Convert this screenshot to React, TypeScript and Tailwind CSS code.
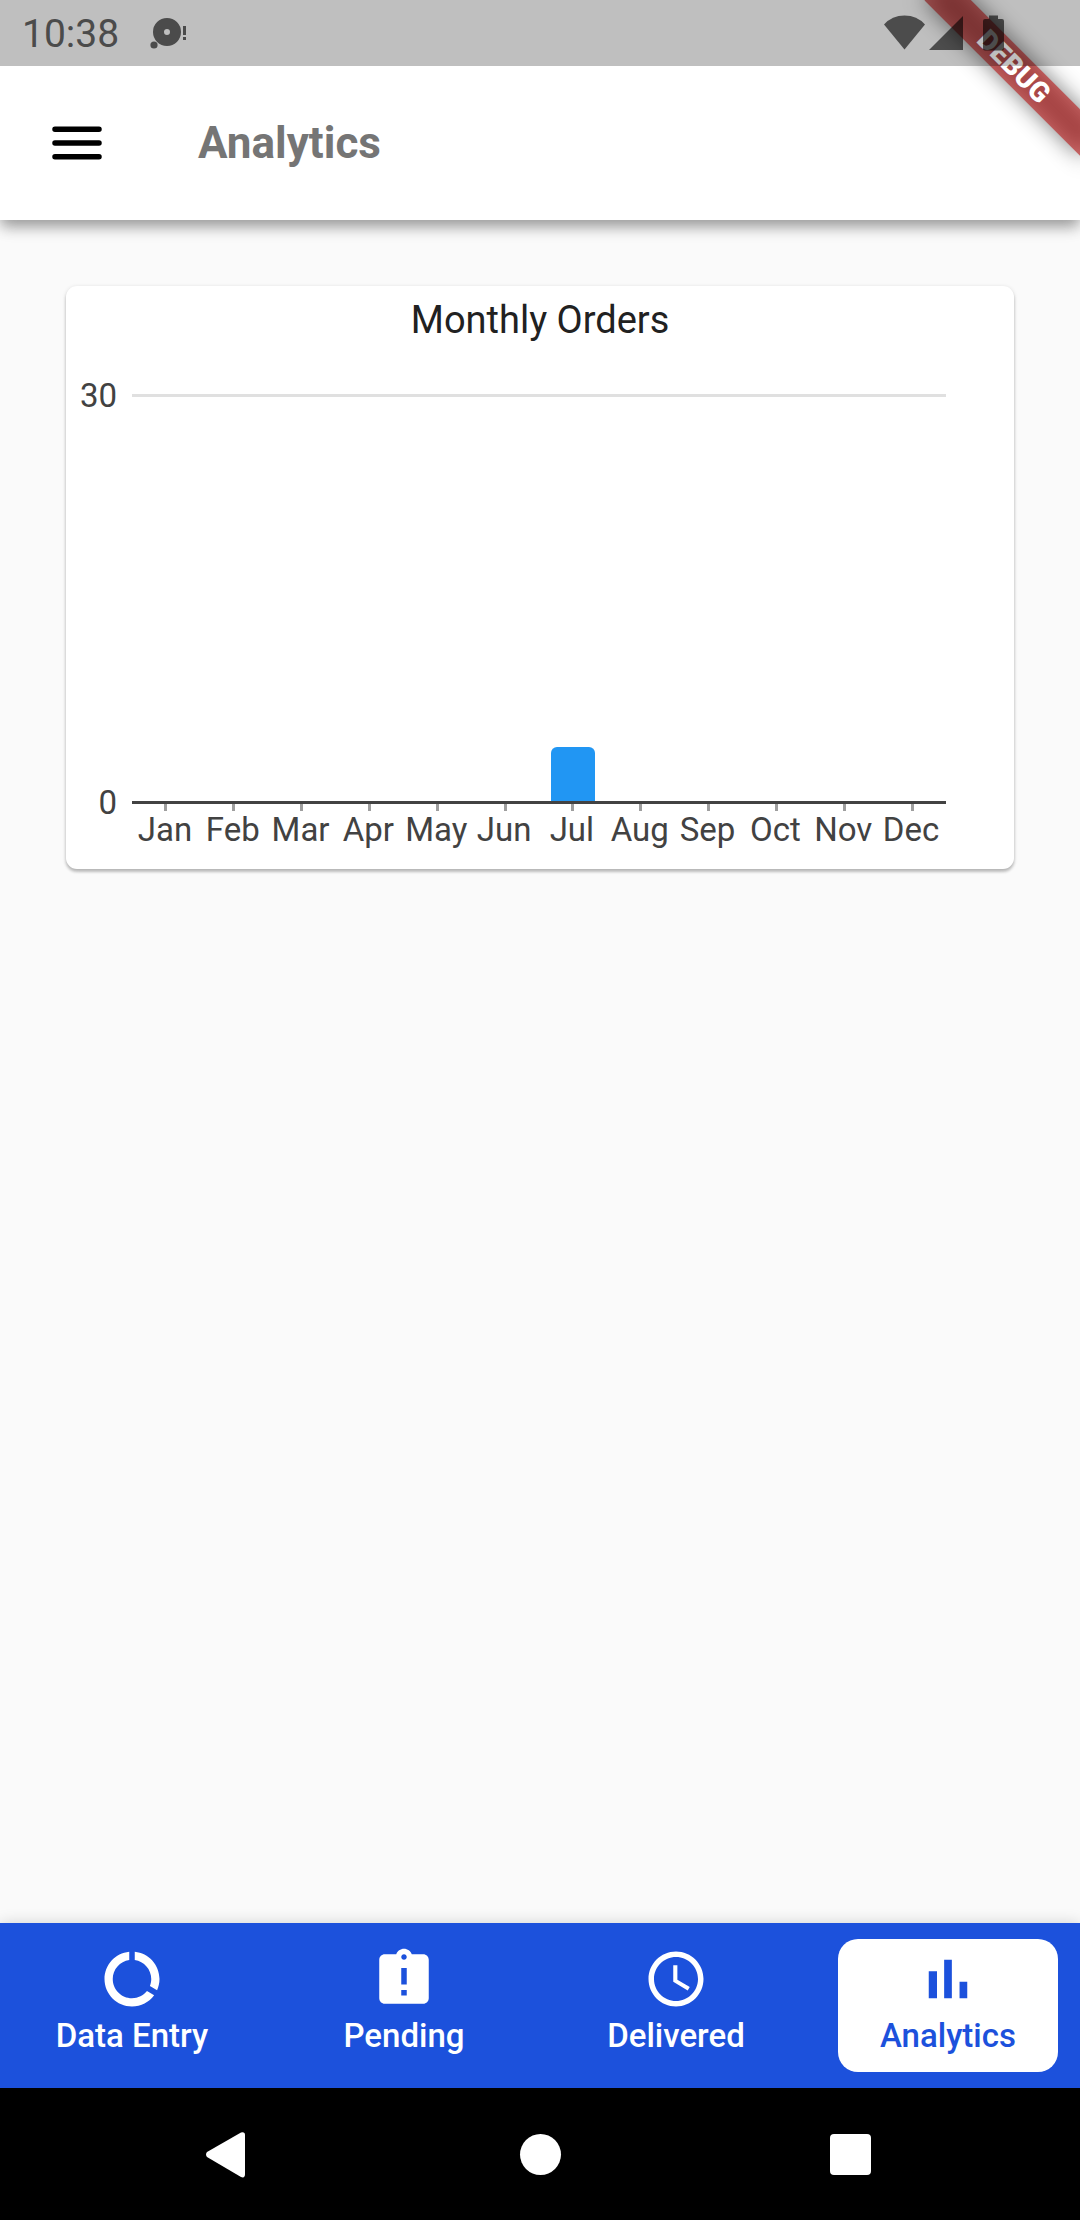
import React from "react";

const MONTHS = ["Jan", "Feb", "Mar", "Apr", "May", "Jun", "Jul", "Aug", "Sep", "Oct", "Nov", "Dec"];
const ORDERS = [0, 0, 0, 0, 0, 0, 4, 0, 0, 0, 0, 0];
const MAX_ORDERS = 30;

const TABS = [
  {
    label: "Data Entry",
    path: "M13 2.05v3.03c3.39.49 6 3.39 6 6.92 0 .9-.18 1.75-.48 2.54l2.6 1.53c.56-1.24.88-2.62.88-4.07 0-5.18-3.95-9.45-9-9.95zM12 19c-3.87 0-7-3.13-7-7 0-3.53 2.61-6.43 6-6.92V2.05c-5.06.5-9 4.76-9 9.95 0 5.52 4.47 10 9.99 10 3.31 0 6.24-1.61 8.06-4.09l-2.6-1.53C16.17 17.98 14.21 19 12 19z",
  },
  {
    label: "Pending",
    path: "M19 3h-4.18C14.4 1.84 13.3 1 12 1c-1.3 0-2.4.84-2.82 2H5c-1.1 0-2 .9-2 2v14c0 1.1.9 2 2 2h14c1.1 0 2-.9 2-2V5c0-1.1-.9-2-2-2zm-6 15h-2v-2h2v2zm0-4h-2V8h2v6zm-1-9c-.55 0-1-.45-1-1s.45-1 1-1 1 .45 1 1-.45 1-1 1z",
  },
  {
    label: "Delivered",
    path: "M11.99 2C6.47 2 2 6.48 2 12s4.47 10 9.99 10C17.52 22 22 17.52 22 12S17.52 2 11.99 2zM12 20c-4.42 0-8-3.58-8-8s3.58-8 8-8 8 3.58 8 8-3.58 8-8 8zm.5-13H11v6l5.25 3.15.75-1.23-4.5-2.67z",
  },
  {
    label: "Analytics",
    path: "M5 9.2h3V19H5zM10.6 5h2.8v14h-2.8zm5.6 8H19v6h-2.8z",
    active: true,
  },
];

function StatusBar() {
  return (
    <div className="relative z-20 flex h-[66px] items-center justify-between bg-black/25 text-[#4b4b4b]">
      <div className="flex items-center gap-[31px] pl-[22px]">
        <span className="pt-[2px] text-[39px] leading-[46px]">10:38</span>
        <svg className="h-8 w-10" viewBox="0 0 40 32" fill="currentColor" aria-hidden="true">
          <path fillRule="evenodd" d="M17 1a14 14 0 1 1 0 28a14 14 0 0 1 0-28zm0 11a3 3 0 1 0 0 6a3 3 0 0 0 0-6z" />
          <circle cx="4" cy="28" r="3.6" />
          <path d="M33 9h3v9h-3zM33 20h3v3h-3z" />
        </svg>
      </div>
      <svg className="mr-[75px] h-9 w-[122px]" viewBox="0 0 122 36" fill="#000" fillOpacity="0.6" aria-hidden="true">
        <path d="M1 9.500Q9 .5 21.500 .5T42 9.500L21.500 34.500z" />
        <path d="M80 1v34H46z" />
        <path d="M106 .5h9V4h4a2 2 0 0 1 2 2v27.500a2 2 0 0 1-2 2h-17a2 2 0 0 1-2-2V6a2 2 0 0 1 2-2h4z" />
      </svg>
    </div>
  );
}

function DebugRibbon() {
  return (
    <div className="pointer-events-none absolute top-0 right-0 z-10 h-[220px] w-[220px] overflow-hidden">
      <div className="absolute top-[50px] left-[44px] h-[33px] w-[220px] rotate-45">
        <div className="absolute inset-0 bg-black/50 blur-[11px]" />
        <div className="absolute inset-0 bg-[#b71c1c]/63 text-center text-[28px] leading-[33px] font-black text-white">
          DEBUG
        </div>
      </div>
    </div>
  );
}

function OrdersChart() {
  return (
    <section className="mx-[66px] mt-[66px] rounded-[11px] bg-white pb-5 shadow-[0_3px_3px_rgba(0,0,0,0.2),0_1px_4px_rgba(0,0,0,0.14)]">
      <h2 className="pt-[11px] text-center text-[38px] leading-[46px] text-[#212121]">Monthly Orders</h2>
      <div className="mt-[51px] flex items-start text-[33px] leading-[38px] text-[#424242]">
        <div className="-mt-[17px] flex h-[445px] w-[66px] flex-col justify-between pr-[15px] text-right">
          <span>{MAX_ORDERS}</span>
          <span>0</span>
        </div>
        <div className="mr-[68px] min-w-0 flex-1">
          <div className="flex h-[407px] items-end border-t-3 border-[#e0e0e0]">
            {ORDERS.map((value, i) => (
              <div key={MONTHS[i]} className="flex h-full flex-1 items-end justify-center">
                {value > 0 && (
                  <div
                    className="w-[44px] rounded-t-[6px] bg-[#2196f3]"
                    style={{ height: `${(value / MAX_ORDERS) * 100}%` }}
                  />
                )}
              </div>
            ))}
          </div>
          <div className="h-[3px] bg-[#424242]" />
          <div className="flex">
            {MONTHS.map((month) => (
              <div key={month} className="flex min-w-0 flex-1 flex-col items-center">
                <span className="h-[7px] w-[3px] bg-[#9e9e9e]" />
                <span className="pr-[2px]">{month}</span>
              </div>
            ))}
          </div>
        </div>
      </div>
    </section>
  );
}

export default function App() {
  return (
    <div className="flex min-h-screen flex-col bg-[#fafafa] font-['Roboto',sans-serif]">
      <header className="relative bg-white shadow-[0_10px_14px_-2px_rgba(0,0,0,0.2),0_4px_14px_rgba(0,0,0,0.26)]">
        <StatusBar />
        <DebugRibbon />
        <div className="flex h-[154px] items-center gap-[88px] px-[44px]">
          <button type="button" aria-label="Open menu" className="text-black">
            <svg className="h-[66px] w-[66px]" viewBox="0 0 24 24" stroke="currentColor" strokeWidth="2" strokeLinecap="round">
              <path d="M4 7h16M4 12h16M4 17h16" />
            </svg>
          </button>
          <h1 className="text-[44px] leading-[52px] font-bold text-[#757575]">Analytics</h1>
        </div>
      </header>

      <main className="flex-1">
        <OrdersChart />
      </main>

      <nav className="flex items-start justify-between bg-[#1c51dc] px-[22px] py-4 shadow-[0_0_14px_rgba(0,0,0,0.16)]">
        {TABS.map((tab) => (
          <button
            key={tab.label}
            type="button"
            aria-current={tab.active ? "page" : undefined}
            className={
              tab.active
                ? "flex h-[133px] w-[220px] flex-col items-center gap-1 rounded-[20px] bg-white pt-[7px] text-[#1c51dc]"
                : "flex h-[133px] w-[220px] flex-col items-center gap-1 rounded-[20px] pt-[7px] text-white"
            }
          >
            <svg className="h-[66px] w-[66px]" viewBox="0 0 24 24" fill="currentColor" aria-hidden="true">
              <path d={tab.path} />
            </svg>
            <span className="text-[33px] leading-[40px] font-medium">{tab.label}</span>
          </button>
        ))}
      </nav>

      <div className="flex h-[132px] items-center justify-center bg-black text-white">
        <button type="button" aria-label="Back" className="flex w-[310px] justify-center">
          <svg className="h-[66px] w-[66px]" viewBox="0 0 66 66" fill="currentColor">
            <path d="M10 31L44 11.500Q48 10.500 48 14V53Q48 57.500 44 56L10 36Q8 33.500 10 31z" />
          </svg>
        </button>
        <button type="button" aria-label="Home" className="flex w-[310px] justify-center">
          <span className="h-[41px] w-[41px] rounded-full bg-white" />
        </button>
        <button type="button" aria-label="Recent apps" className="flex w-[310px] justify-center">
          <span className="h-[41px] w-[41px] rounded-[4px] bg-white" />
        </button>
      </div>
    </div>
  );
}
